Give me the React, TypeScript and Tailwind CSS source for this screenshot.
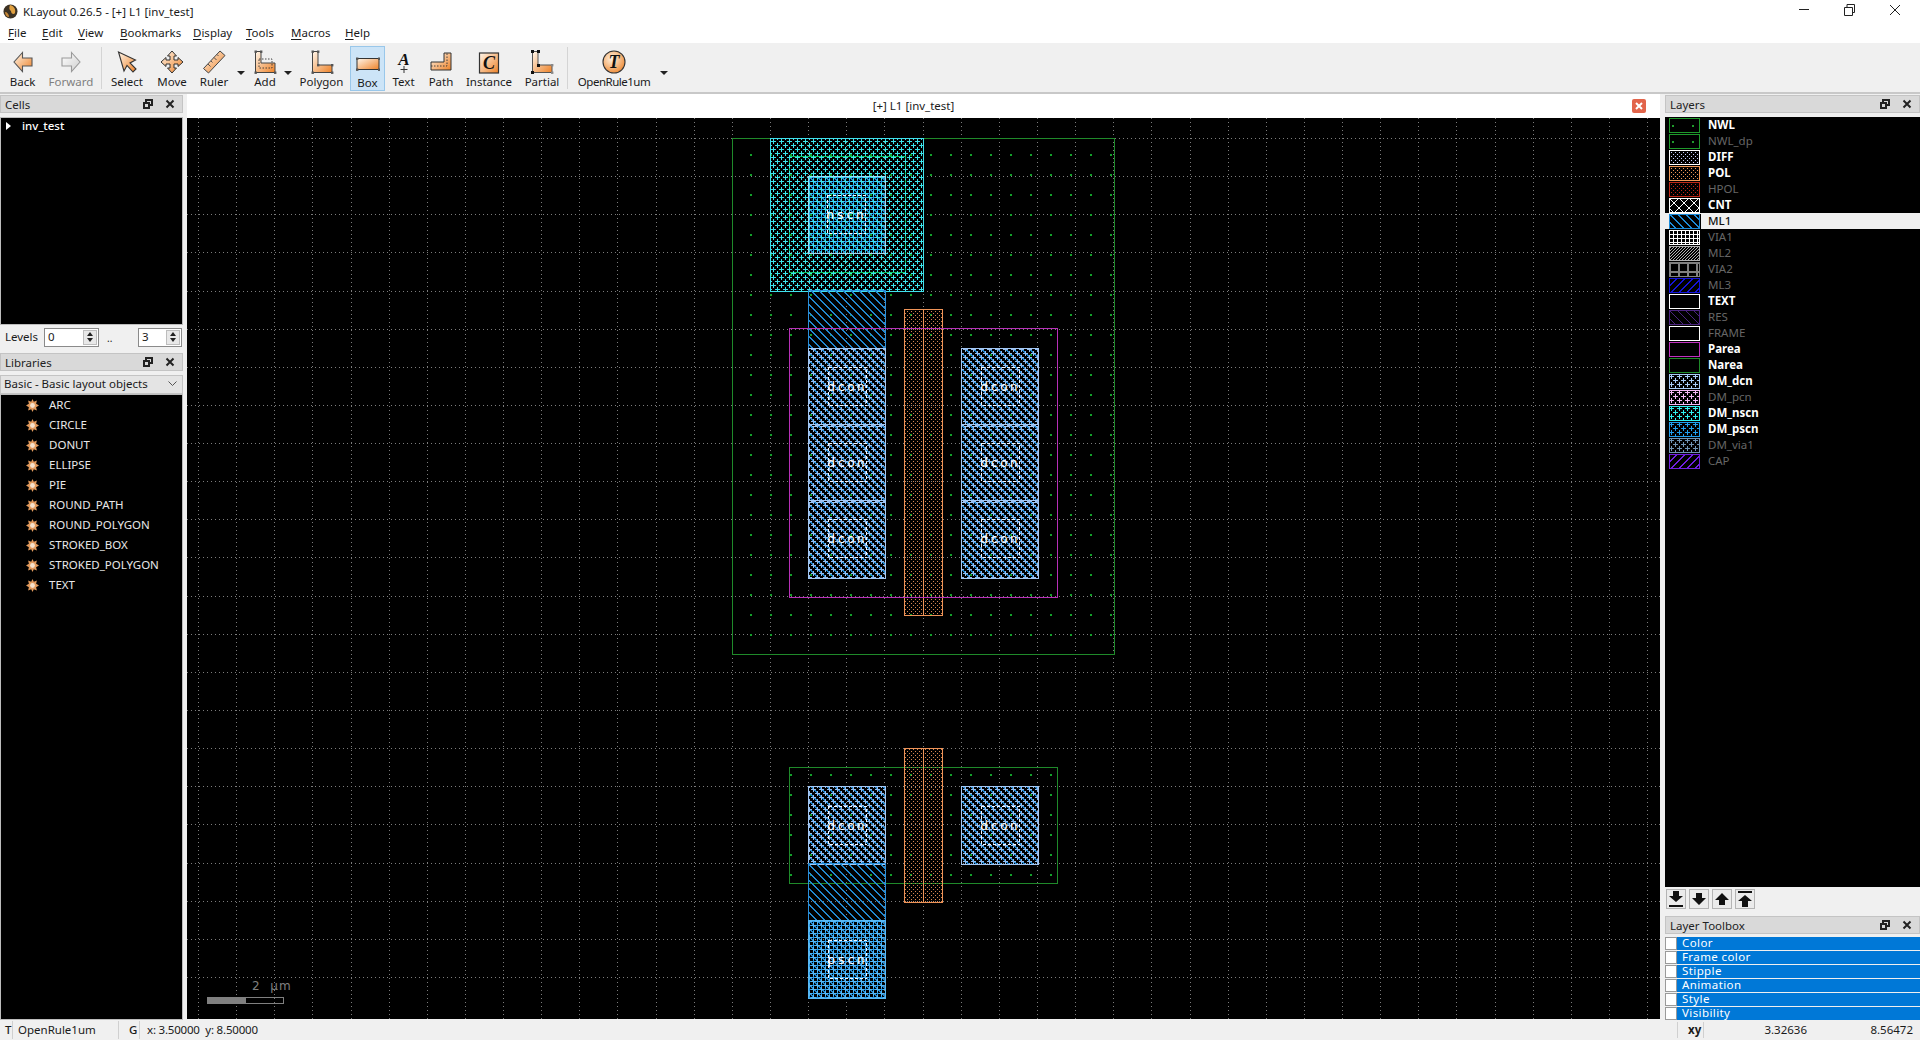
import React from "react";

type StippleKind = "hatch" | "up" | "plus" | "plus2" | "fine" | "x" | "grid" | "brick" | "tiny" | "thin" | "dots" | "sparse" | "none";

// pixel rects of one stipple tile
function tile(kind: StippleKind): { size: number; rects: number[][] } {
  const range = (n: number) => Array.from({ length: n }, (_, i) => i);
  switch (kind) {
    case "hatch":
      return { size: 8, rects: range(8).flatMap((i) => [[i, i, 1, 1], [(i + 1) % 8, i, 1, 1]]) };
    case "up":
      return { size: 8, rects: range(8).flatMap((i) => [[7 - i, i, 1, 1], [(8 - i) % 8, i, 1, 1]]) };
    case "thin":
      return { size: 8, rects: range(8).map((i) => [i, i, 1, 1]) };
    case "plus":
      return { size: 8, rects: [[0, 2, 5, 1], [2, 0, 1, 5], [4, 6, 4, 1], [0, 6, 1, 1], [6, 4, 1, 4], [6, 0, 1, 1]] };
    case "plus2":
      return { size: 8, rects: [[4, 2, 4, 1], [0, 2, 1, 1], [6, 0, 1, 5], [0, 6, 5, 1], [2, 4, 1, 4], [2, 0, 1, 1]] };
    case "fine":
      return { size: 4, rects: [[0, 0, 1, 1], [2, 2, 1, 1]] };
    case "x":
      return { size: 10, rects: range(10).flatMap((i) => [[i, i, 1, 1], [9 - i, i, 1, 1]]) };
    case "grid":
      return { size: 4, rects: [[0, 0, 4, 1], [0, 0, 1, 4]] };
    case "brick":
      return { size: 9, rects: [[0, 0, 9, 2], [0, 0, 2, 9]] };
    case "tiny":
      return { size: 3, rects: range(3).map((i) => [2 - i, i, 1, 1]) };
    case "dots":
      return { size: 20, rects: [[11, 15, 2, 2]] };
    case "sparse":
      return { size: 20, rects: [[3, 7, 2, 2]] };
    default:
      return { size: 8, rects: [] };
  }
}

function Stipple({ id, kind, color }: { id: string; kind: StippleKind; color: string }) {
  const t = tile(kind);
  return (
    <pattern id={id} width={t.size} height={t.size} patternUnits="userSpaceOnUse">
      {t.rects.map((r, i) => (
        <rect key={i} x={r[0]} y={r[1]} width={r[2]} height={r[3]} fill={color} />
      ))}
    </pattern>
  );
}

const layers: { name: string; kind: StippleKind; color: string; on: boolean; frame?: string }[] = [
  { name: "NWL", kind: "sparse", color: "#1f9a2c", on: true },
  { name: "NWL_dp", kind: "sparse", color: "#1f9a2c", on: false },
  { name: "DIFF", kind: "fine", color: "#c8d0ff", on: true, frame: "#ffffff" },
  { name: "POL", kind: "fine", color: "#f09858", on: true },
  { name: "HPOL", kind: "fine", color: "#c02818", on: false },
  { name: "CNT", kind: "x", color: "#ffffff", on: true },
  { name: "ML1", kind: "hatch", color: "#1c8ad8", on: true },
  { name: "VIA1", kind: "grid", color: "#ffffff", on: false },
  { name: "ML2", kind: "tiny", color: "#b0b0b0", on: false },
  { name: "VIA2", kind: "brick", color: "#808080", on: false },
  { name: "ML3", kind: "up", color: "#1414d8", on: false },
  { name: "TEXT", kind: "none", color: "#ffffff", on: true },
  { name: "RES", kind: "thin", color: "#4c2480", on: false },
  { name: "FRAME", kind: "none", color: "#ffffff", on: false },
  { name: "Parea", kind: "none", color: "#c030c0", on: true },
  { name: "Narea", kind: "none", color: "#1f8a2a", on: true },
  { name: "DM_dcn", kind: "plus", color: "#a8ccf8", on: true },
  { name: "DM_pcn", kind: "plus", color: "#f4b8f4", on: false },
  { name: "DM_nscn", kind: "plus", color: "#30f0f0", on: true },
  { name: "DM_pscn", kind: "plus", color: "#20a0f0", on: true },
  { name: "DM_via1", kind: "plus", color: "#7094b4", on: false },
  { name: "CAP", kind: "up", color: "#7020e0", on: false },
];

function Swatch({ layer }: { layer: (typeof layers)[number] }) {
  const id = "sw-" + layer.name;
  return (
    <svg width="32" height="15" shapeRendering="crispEdges" className="shrink-0">
      <defs>
        <Stipple id={id} kind={layer.kind} color={layer.color} />
      </defs>
      <rect x="0" y="0" width="32" height="15" fill="#000" />
      <rect x="0.5" y="0.5" width="30" height="14" fill={`url(#${id})`} stroke={layer.frame ?? layer.color} />
    </svg>
  );
}

function ToolIcon({ children }: { children: React.ReactNode }) {
  return (
    <svg width="24" height="24" viewBox="0 0 24 24" className="shrink-0">
      <defs>
        <linearGradient id="org" x1="0" y1="0" x2="1" y2="1">
          <stop offset="0" stopColor="#fff6ea" />
          <stop offset="1" stopColor="#ee8228" />
        </linearGradient>
        <linearGradient id="gry" x1="0" y1="0" x2="1" y2="1">
          <stop offset="0" stopColor="#ffffff" />
          <stop offset="1" stopColor="#cfcfcf" />
        </linearGradient>
        <radialGradient id="rad" cx="0.4" cy="0.35" r="0.7">
          <stop offset="0" stopColor="#fff4e4" />
          <stop offset="1" stopColor="#ee8a34" />
        </radialGradient>
      </defs>
      {children}
    </svg>
  );
}

const Handle = ({ x, y, c = "#555" }: { x: number; y: number; c?: string }) => (
  <rect x={x - 1} y={y - 1} width="2.4" height="2.4" fill={c} />
);

const icons: Record<string, React.ReactNode> = {
  Back: <path d="M11.5 2.5 L3 12 L11.5 21.5 V16 H21 V8 H11.5 Z" fill="url(#org)" stroke="#555" strokeWidth="1.1" />,
  Forward: <path d="M12.5 2.5 L21 12 L12.5 21.5 V16 H3 V8 H12.5 Z" fill="url(#gry)" stroke="#9a9a9a" strokeWidth="1.1" />,
  Select: <path d="M3.5 2 L9 21 L12 15.5 L18 22 L21 19 L15 13 L20.5 10 Z" fill="url(#org)" stroke="#333" strokeWidth="1.1" />,
  Move: (
    <path
      d="M12 1 L16.5 6 H14 V10 H18 V7.5 L23 12 L18 16.5 V14 H14 V18 H16.5 L12 23 L7.5 18 H10 V14 H6 V16.5 L1 12 L6 7.5 V10 H10 V6 H7.5 Z"
      fill="url(#org)"
      stroke="#333"
      strokeWidth="1"
    />
  ),
  Ruler: (
    <g>
      <path d="M1.5 18.5 L18 1 L23 5.5 L6.5 23 Z" fill="url(#org)" stroke="#444" strokeWidth="1" />
      <path d="M6 14 L8.5 16.5 M9 11 L10.5 12.5 M12 7.5 L14.5 10 M15 4.5 L16.5 6" stroke="#444" strokeWidth="0.9" />
    </g>
  ),
  Add: (
    <g>
      <path d="M2.5 1.5 H8 V13 H22 V22.5 H2.5 Z" fill="url(#org)" stroke="#444" strokeWidth="1" />
      <rect x="6" y="9" width="13" height="9" fill="none" stroke="#333" strokeWidth="0.9" strokeDasharray="1.5 1.5" />
      <Handle x={2.5} y={1.5} />
      <Handle x={8} y={1.5} />
      <Handle x={22} y={22.5} />
      <Handle x={2.5} y={22.5} />
    </g>
  ),
  Polygon: (
    <g>
      <path d="M2.5 1.5 H8 V15 H22 V22.5 H2.5 Z" fill="url(#org)" stroke="#444" strokeWidth="1" />
      <Handle x={2.5} y={1.5} />
      <Handle x={8} y={1.5} />
      <Handle x={8} y={15} />
      <Handle x={22} y={15} />
      <Handle x={22} y={22.5} />
      <Handle x={2.5} y={22.5} />
    </g>
  ),
  Box: (
    <g>
      <rect x="1" y="7.5" width="22" height="11" fill="url(#org)" stroke="#333" strokeWidth="1" />
      <Handle x={1} y={7.5} />
      <Handle x={23} y={7.5} />
      <Handle x={1} y={18.5} />
      <Handle x={23} y={18.5} />
    </g>
  ),
  Text: (
    <g>
      <text x="12" y="15" textAnchor="middle" fontFamily="Liberation Serif" fontWeight="700" fontStyle="italic" fontSize="17" fill="#111">
        A
      </text>
      <path d="M12 16 V23 M8.5 19.5 H15.5" stroke="#333" strokeWidth="1" />
    </g>
  ),
  Path: (
    <g>
      <path d="M2 12 H15 V3 H22 V20 H2 Z" fill="url(#org)" stroke="#333" strokeWidth="1" />
      <path d="M2 16 H18 V3" fill="none" stroke="#333" strokeWidth="0.9" strokeDasharray="1.5 1.5" />
    </g>
  ),
  Instance: (
    <g>
      <rect x="2.5" y="3" width="19" height="20" fill="url(#org)" stroke="#333" strokeWidth="1.2" />
      <text x="12" y="18.5" textAnchor="middle" fontFamily="Liberation Serif" fontWeight="700" fontStyle="italic" fontSize="18" fill="#111">
        C
      </text>
    </g>
  ),
  Partial: (
    <g>
      <path d="M2.5 1.5 H8 V15 H22 V22.5 H2.5 Z" fill="url(#org)" stroke="#555" strokeWidth="1" />
      <rect x="1" y="0" width="3" height="3" fill="#111" />
      <rect x="7" y="0" width="3" height="3" fill="#111" />
      <rect x="7" y="14" width="3" height="3" fill="#111" />
      <rect x="1" y="21" width="3" height="3" fill="#111" />
      <Handle x={22} y={15} c="#888" />
      <Handle x={22} y={22.5} c="#888" />
    </g>
  ),
  OpenRule1um: (
    <g>
      <circle cx="12" cy="12" r="11" fill="url(#rad)" stroke="#333" strokeWidth="1.1" />
      <text x="12" y="18" textAnchor="middle" fontFamily="Liberation Serif" fontWeight="700" fontStyle="italic" fontSize="18" fill="#111">
        T
      </text>
    </g>
  ),
};

function Tool({ name, w, active, off }: { name: string; w: string; active?: boolean; off?: boolean }) {
  return (
    <div
      className={`flex h-[45px] flex-col items-center justify-start pt-[4px] ${w} ${
        active ? "border border-[#99c7ea] bg-[#cce4f7]" : ""
      }`}
    >
      <ToolIcon>{icons[name]}</ToolIcon>
      <span
        className={`whitespace-nowrap leading-[15px] ${off ? "text-[#7f7f7f]" : "text-[#1a1a1a]"} ${
          name === "OpenRule1um" ? "tracking-[-0.5px]" : ""
        }`}
      >
        {name}
      </span>
    </div>
  );
}

const Caret = ({ w }: { w: string }) => (
  <div className={`flex h-[45px] items-center justify-center pt-[10px] ${w}`}>
    <div className="h-0 w-0 border-x-[4px] border-t-[4px] border-x-transparent border-t-[#222]" />
  </div>
);

const Sep = () => <div className="mx-[1px] h-[42px] w-px bg-[#d4d4d4]" />;

function DockTitle({ title }: { title: string }) {
  return (
    <div className="flex h-[18px] shrink-0 items-center border border-[#c4c4c4] bg-[#d9d9d9] pl-[4px] pr-[7px] text-[#222]">
      <span className="flex-1 pt-[1px]">{title}</span>
      <svg width="10" height="10" viewBox="0 0 10 10" className="mr-[12px]" fill="none" stroke="#222" strokeWidth="1.2" shapeRendering="crispEdges">
        <rect x="3" y="1" width="6" height="5" />
        <rect x="1" y="4" width="5" height="5" fill="#d9d9d9" />
      </svg>
      <svg width="10" height="10" viewBox="0 0 10 10" stroke="#222" strokeWidth="2">
        <path d="M1.5 1.5 L8.5 8.5 M8.5 1.5 L1.5 8.5" />
      </svg>
    </div>
  );
}

function Spin({ value, w }: { value: string; w: string }) {
  return (
    <div className={`flex h-[19px] items-center border border-[#8a8a8a] bg-white pl-[3px] pr-[1px] ${w}`}>
      <span className="flex-1 leading-none">{value}</span>
      <div className="flex h-[15px] w-[14px] flex-col items-center justify-center gap-[2px] border border-[#bdbdbd] bg-[#e8e8e8]">
        <div className="h-0 w-0 border-x-[3.5px] border-b-[4px] border-x-transparent border-b-[#222]" />
        <div className="h-0 w-0 border-x-[3.5px] border-t-[4px] border-x-transparent border-t-[#222]" />
      </div>
    </div>
  );
}

function LibIcon() {
  return (
    <svg width="13" height="13" viewBox="0 0 13 13" className="shrink-0">
      <path
        d="M6.5 0 L7.8 2.7 L10.9 1.6 L10.1 4.7 L13 6.5 L10.1 8.3 L10.9 11.4 L7.8 10.3 L6.5 13 L5.2 10.3 L2.1 11.4 L2.9 8.3 L0 6.5 L2.9 4.7 L2.1 1.6 L5.2 2.7 Z"
        fill="#e29a5c"
      />
      <circle cx="6.5" cy="6.5" r="2.4" fill="#f7e2cc" />
    </svg>
  );
}

function MoveBtn({ dir }: { dir: "bottom" | "down" | "up" | "top" }) {
  const d = {
    bottom: "M6 1 H12 V6 H16 L9 12 L2 6 H6 Z M2 15 H16 V17 H2 Z",
    down: "M6 3 H12 V8 H16 L9 15 L2 8 H6 Z",
    up: "M9 3 L16 10 H12 V15 H6 V10 H2 Z",
    top: "M2 1 H16 V3 H2 Z M9 5 L16 11 H12 V17 H6 V11 H2 Z",
  }[dir];
  return (
    <div className="flex h-[20px] w-[20px] items-center justify-center border border-[#b4b4b4] bg-[#ebebeb]">
      <svg width="18" height="18" viewBox="0 0 18 18">
        <path d={d} fill="#111" />
      </svg>
    </div>
  );
}

function Chip({ x, y, w, h, fills, stroke }: { x: number; y: number; w: number; h: number; fills: string[]; stroke: string }) {
  return (
    <g>
      {fills.map((f) => (
        <rect key={f} x={x} y={y} width={w + 1} height={h + 1} fill={`url(#${f})`} />
      ))}
      <rect x={x + 0.5} y={y + 0.5} width={w} height={h} fill="none" stroke={stroke} />
    </g>
  );
}

function Cut({ x, y, label }: { x: number; y: number; label: string }) {
  return (
    <g>
      <rect x={x + 0.5} y={y + 0.5} width="38" height="38" fill="none" stroke="#f4f8ff" strokeDasharray="3 2" />
      <text x={x + 19} y={y + 24} textAnchor="middle" fontFamily="DejaVu Sans Mono" fontSize="13" letterSpacing="2" fill="#ffffff">
        {label}
      </text>
    </g>
  );
}

function Poly({ y, h }: { y: number; h: number }) {
  return (
    <g>
      <rect x="905" y={y} width="39" height={h} fill="url(#c-pol)" />
      <rect x="905.5" y={y + 0.5} width="38" height={h} fill="none" stroke="#ef9458" />
      <path d={`M924.5 ${y} V${y + h}`} stroke="#ef9458" />
    </g>
  );
}

function LayoutCanvas() {
  const xs = Array.from({ length: 39 }, (_, i) => Math.floor(198.5 + i * 38.136));
  const ys = Array.from({ length: 23 }, (_, i) => Math.floor(138.5 + i * 38.136));
  return (
    <svg width="1473" height="901" viewBox="187 118 1473 901" shapeRendering="crispEdges" className="block bg-black">
      <defs>
        <Stipple id="c-dots" kind="dots" color="#12a02a" />
        <Stipple id="c-pol" kind="fine" color="#d48652" />
        <Stipple id="c-ml1" kind="hatch" color="#2288d0" />
        <Stipple id="c-dcn" kind="plus" color="#94bef0" />
        <Stipple id="c-nscn" kind="plus" color="#3ce4ec" />
        <Stipple id="c-pscn" kind="plus" color="#58b8f4" />
        <Stipple id="c-blue" kind="plus2" color="#2a9ce8" />
      </defs>

      {/* grid */}
      {xs.map((x) => (
        <path key={x} d={`M${x + 0.5} 118 V1019`} stroke="#7c7c7c" strokeDasharray="1 3" />
      ))}
      {ys.map((y) => (
        <path key={y} d={`M187 ${y + 0.5} H1660`} stroke="#7c7c7c" strokeDasharray="1 3" />
      ))}

      <g transform="translate(-1 -1)">
        {/* upper cell */}
        <rect x="733" y="139" width="383" height="517" fill="url(#c-dots)" />
        <rect x="733.5" y="139.5" width="382" height="516" fill="none" stroke="#1f8a2a" />
        <rect x="790.5" y="157.5" width="116" height="116" fill="none" stroke="#12c060" />
        <Chip x={771} y={139} w={153} h={153} fills={["c-nscn"]} stroke="#40e0ec" />
        <Chip x={809} y={177} w={77} h={77} fills={["c-blue", "c-ml1", "c-nscn"]} stroke="#a0dcf4" />
        <Cut x={828} y={196} label="nscn" />
        <Chip x={809} y={291} w={77} h={58} fills={["c-ml1"]} stroke="#2a90dc" />
        <Poly y={310} h={306} />
        <rect x="790.5" y="329.5" width="268" height="269" fill="none" stroke="#b830b8" />
        {[349, 425, 501].map((y) => (
          <g key={y}>
            <Chip x={809} y={y} w={77} h={78} fills={["c-ml1", "c-dcn"]} stroke="#a4c8f4" />
            <Chip x={962} y={y} w={77} h={78} fills={["c-ml1", "c-dcn"]} stroke="#a4c8f4" />
            <Cut x={829} y={y + 19} label="dcon" />
            <Cut x={982} y={y + 19} label="dcon" />
          </g>
        ))}

        {/* lower cell */}
        <rect x="790" y="768" width="269" height="117" fill="url(#c-dots)" />
        <rect x="790.5" y="768.5" width="268" height="116" fill="none" stroke="#1f8a2a" />
        <Poly y={749} h={154} />
        <Chip x={809} y={787} w={77} h={78} fills={["c-ml1", "c-dcn"]} stroke="#a4c8f4" />
        <Chip x={962} y={787} w={77} h={78} fills={["c-ml1", "c-dcn"]} stroke="#a4c8f4" />
        <Cut x={829} y={807} label="dcon" />
        <Cut x={982} y={807} label="dcon" />
        <Chip x={809} y={864} w={77} h={58} fills={["c-ml1"]} stroke="#2a90dc" />
        <Chip x={809} y={921} w={77} h={78} fills={["c-blue", "c-ml1", "c-pscn"]} stroke="#58b8f4" />
        <Cut x={829} y={941} label="pscn" />
      </g>

      {/* scale bar */}
      <rect x="207.5" y="997.5" width="76" height="6" fill="none" stroke="#808080" />
      <rect x="207" y="997" width="39" height="7" fill="#808080" />
      <text x="252" y="990" fontFamily="DejaVu Sans" fontSize="12" letterSpacing="1" fill="#808080" xmlSpace="preserve" shapeRendering="auto">
        2  µm
      </text>
    </svg>
  );
}

const menus = ["File", "Edit", "View", "Bookmarks", "Display", "Tools", "Macros", "Help"];
const menuW = ["w-[34px]", "w-[36px]", "w-[42px]", "w-[73px]", "w-[53px]", "w-[45px]", "w-[54px]", "w-[40px]"];
const libs = ["ARC", "CIRCLE", "DONUT", "ELLIPSE", "PIE", "ROUND_PATH", "ROUND_POLYGON", "STROKED_BOX", "STROKED_POLYGON", "TEXT"];
const toolbox = ["Color", "Frame color", "Stipple", "Animation", "Style", "Visibility"];

export default function App() {
  return (
    <div className="flex h-[1040px] w-[1920px] flex-col overflow-hidden bg-[#f0f0f0] font-['Noto_Sans',sans-serif] text-[11.5px] text-[#1a1a1a]">
      {/* title bar */}
      <div className="flex h-[23px] shrink-0 items-center bg-white pl-[3px]">
        <svg width="15" height="15" viewBox="0 0 15 15" className="mr-[5px]">
          <circle cx="7.5" cy="7.5" r="7" fill="#3c3224" />
          <path d="M7 1 C11 2 13 5 12 9 C11 11 8 10 8 7 C6 6 6 3 7 1 Z" fill="#e0a040" />
          <path d="M2 8 C4 8 6 10 6 13 C4 13 2 11 2 8 Z" fill="#c88838" />
        </svg>
        <span className="flex-1">KLayout 0.26.5 - [+] L1 [inv_test]</span>
        <svg width="101" height="12" viewBox="0 0 101 12" fill="none" stroke="#222" className="mb-[3px] mr-[20px]">
          <path d="M0 5.5 H10" />
          <path d="M45.5 3.5 H53.5 V11.5 H45.5 Z M48 3 V0.5 H55.5 V8.5 H54" />
          <path d="M91 1 L101 11 M101 1 L91 11" />
        </svg>
      </div>

      {/* menu bar */}
      <div className="flex h-[21px] shrink-0 items-center border-b border-[#f0f0f0] bg-white pl-[8px]">
        {menus.map((m, i) => (
          <span key={m} className={menuW[i]}>
            <span className="underline underline-offset-2">{m[0]}</span>
            {m.slice(1)}
          </span>
        ))}
      </div>

      {/* toolbar */}
      <div className="flex h-[50px] shrink-0 items-center border-b-2 border-[#c8c8c8] pl-[3px]">
        <Tool name="Back" w="w-[39px]" />
        <Tool name="Forward" w="w-[58px]" off />
        <Sep />
        <Tool name="Select" w="w-[48px]" />
        <Tool name="Move" w="w-[42px]" />
        <Tool name="Ruler" w="w-[42px]" />
        <Caret w="w-[12px]" />
        <Tool name="Add" w="w-[36px]" />
        <Caret w="w-[10px]" />
        <Tool name="Polygon" w="w-[57px]" />
        <Tool name="Box" w="w-[35px]" active />
        <Tool name="Text" w="w-[37px]" />
        <Tool name="Path" w="w-[38px]" />
        <Tool name="Instance" w="w-[58px]" />
        <Tool name="Partial" w="w-[48px]" />
        <Sep />
        <Tool name="OpenRule1um" w="w-[90px]" />
        <Caret w="w-[10px]" />
      </div>

      {/* main */}
      <div className="flex min-h-0 flex-1">
        {/* left docks */}
        <div className="flex w-[183px] shrink-0 flex-col pt-[1px]">
          <DockTitle title="Cells" />
          <div className="mt-[4px] h-[208px] shrink-0 border border-[#bdbdbd] bg-black pl-[5px] text-white">
            <div className="flex h-[15px] items-center font-medium">
              <div className="mr-[11px] h-0 w-0 border-y-[4px] border-l-[5px] border-y-transparent border-l-white" />
              inv_test
            </div>
          </div>
          <div className="flex h-[24px] shrink-0 items-center pl-[5px]">
            <span className="w-[39px]">Levels</span>
            <Spin value="0" w="w-[55px]" />
            <span className="w-[39px] pl-[8px] pt-[3px] text-[10px]">..</span>
            <Spin value="3" w="w-[44px]" />
          </div>
          <div className="mt-[4px]">
            <DockTitle title="Libraries" />
          </div>
          <div className="mt-[4px] flex h-[19px] shrink-0 items-center border border-[#c4c4c4] bg-[#e4e4e4] pb-[1px] pl-[3px] pr-[5px]">
            <span className="flex-1">Basic - Basic layout objects</span>
            <svg width="9" height="6" viewBox="0 0 9 6" fill="none" stroke="#555">
              <path d="M0.5 0.5 L4.5 4.5 L8.5 0.5" />
            </svg>
          </div>
          <div className="flex min-h-0 flex-1 flex-col border border-[#bdbdbd] bg-black pl-[25px] text-[#e8e8e8]">
            {libs.map((l) => (
              <div key={l} className="flex h-[20px] shrink-0 items-center gap-[10px]">
                <LibIcon />
                {l}
              </div>
            ))}
          </div>
        </div>

        {/* layout view */}
        <div className="ml-[4px] flex w-[1473px] shrink-0 flex-col">
          <div className="flex h-[24px] shrink-0 items-center bg-white pr-[14px]">
            <span className="flex-1 pl-[8px] text-center">[+] L1 [inv_test]</span>
            <div className="flex h-[14px] w-[14px] items-center justify-center rounded-[2px] bg-[#e2644a]">
              <svg width="8" height="8" viewBox="0 0 8 8" stroke="#fff" strokeWidth="2">
                <path d="M1 1 L7 7 M7 1 L1 7" />
              </svg>
            </div>
          </div>
          <LayoutCanvas />
        </div>

        {/* right docks */}
        <div className="ml-[5px] flex min-w-0 flex-1 flex-col pt-[1px]">
          <DockTitle title="Layers" />
          <div className="mt-[4px] h-[770px] shrink-0 overflow-hidden bg-black">
            {layers.map((l) => {
              const sel = l.name === "ML1";
              return (
                <div
                  key={l.name}
                  className={`flex h-[16px] items-center gap-[7px] pl-[4px] ${
                    sel ? "bg-[#f0f0f0] font-medium text-[#111]" : l.on ? "font-bold text-white" : "text-[#666]"
                  }`}
                >
                  <Swatch layer={l} />
                  <span className="leading-none">{l.name}</span>
                </div>
              );
            })}
          </div>
          <div className="mt-[2px] flex h-[20px] shrink-0 gap-[3px] pl-[1px]">
            <MoveBtn dir="bottom" />
            <MoveBtn dir="down" />
            <MoveBtn dir="up" />
            <MoveBtn dir="top" />
          </div>
          <div className="mt-[7px]">
            <DockTitle title="Layer Toolbox" />
          </div>
          <div className="mt-[3px] flex flex-col gap-[1px]">
            {toolbox.map((t) => (
              <div key={t} className="flex h-[13px] items-start bg-[#0078d7] leading-[11px] tracking-[0.4px] text-white">
                <div className="mr-[5px] h-[13px] w-[12px] shrink-0 border border-[#9a9a9a] bg-white" />
                {t}
              </div>
            ))}
          </div>
        </div>
      </div>

      {/* status bar */}
      <div className="flex h-[20px] shrink-0 items-center bg-[#f0f0f0]">
        <span className="w-[13px] border-r border-[#d0d0d0] pl-[5px] font-medium">T</span>
        <span className="w-[106px] border-r border-[#d0d0d0] pl-[5px]">OpenRule1um</span>
        <span className="w-[21px] border-r border-[#d0d0d0] pl-[10px] font-medium">G</span>
        <span className="whitespace-pre pl-[7px] tracking-[-0.2px]">x: 3.50000  y: 8.50000</span>
        <div className="ml-auto flex h-full items-center">
          <span className="h-[16px] w-px bg-[#d0d0d0]" />
          <span className="w-[25px] pl-[10px] font-bold">xy</span>
          <span className="h-[16px] w-px bg-[#d0d0d0]" />
          <span className="w-[103px] text-right">3.32636</span>
          <span className="w-[113px] pr-[7px] text-right">8.56472</span>
        </div>
      </div>
    </div>
  );
}
